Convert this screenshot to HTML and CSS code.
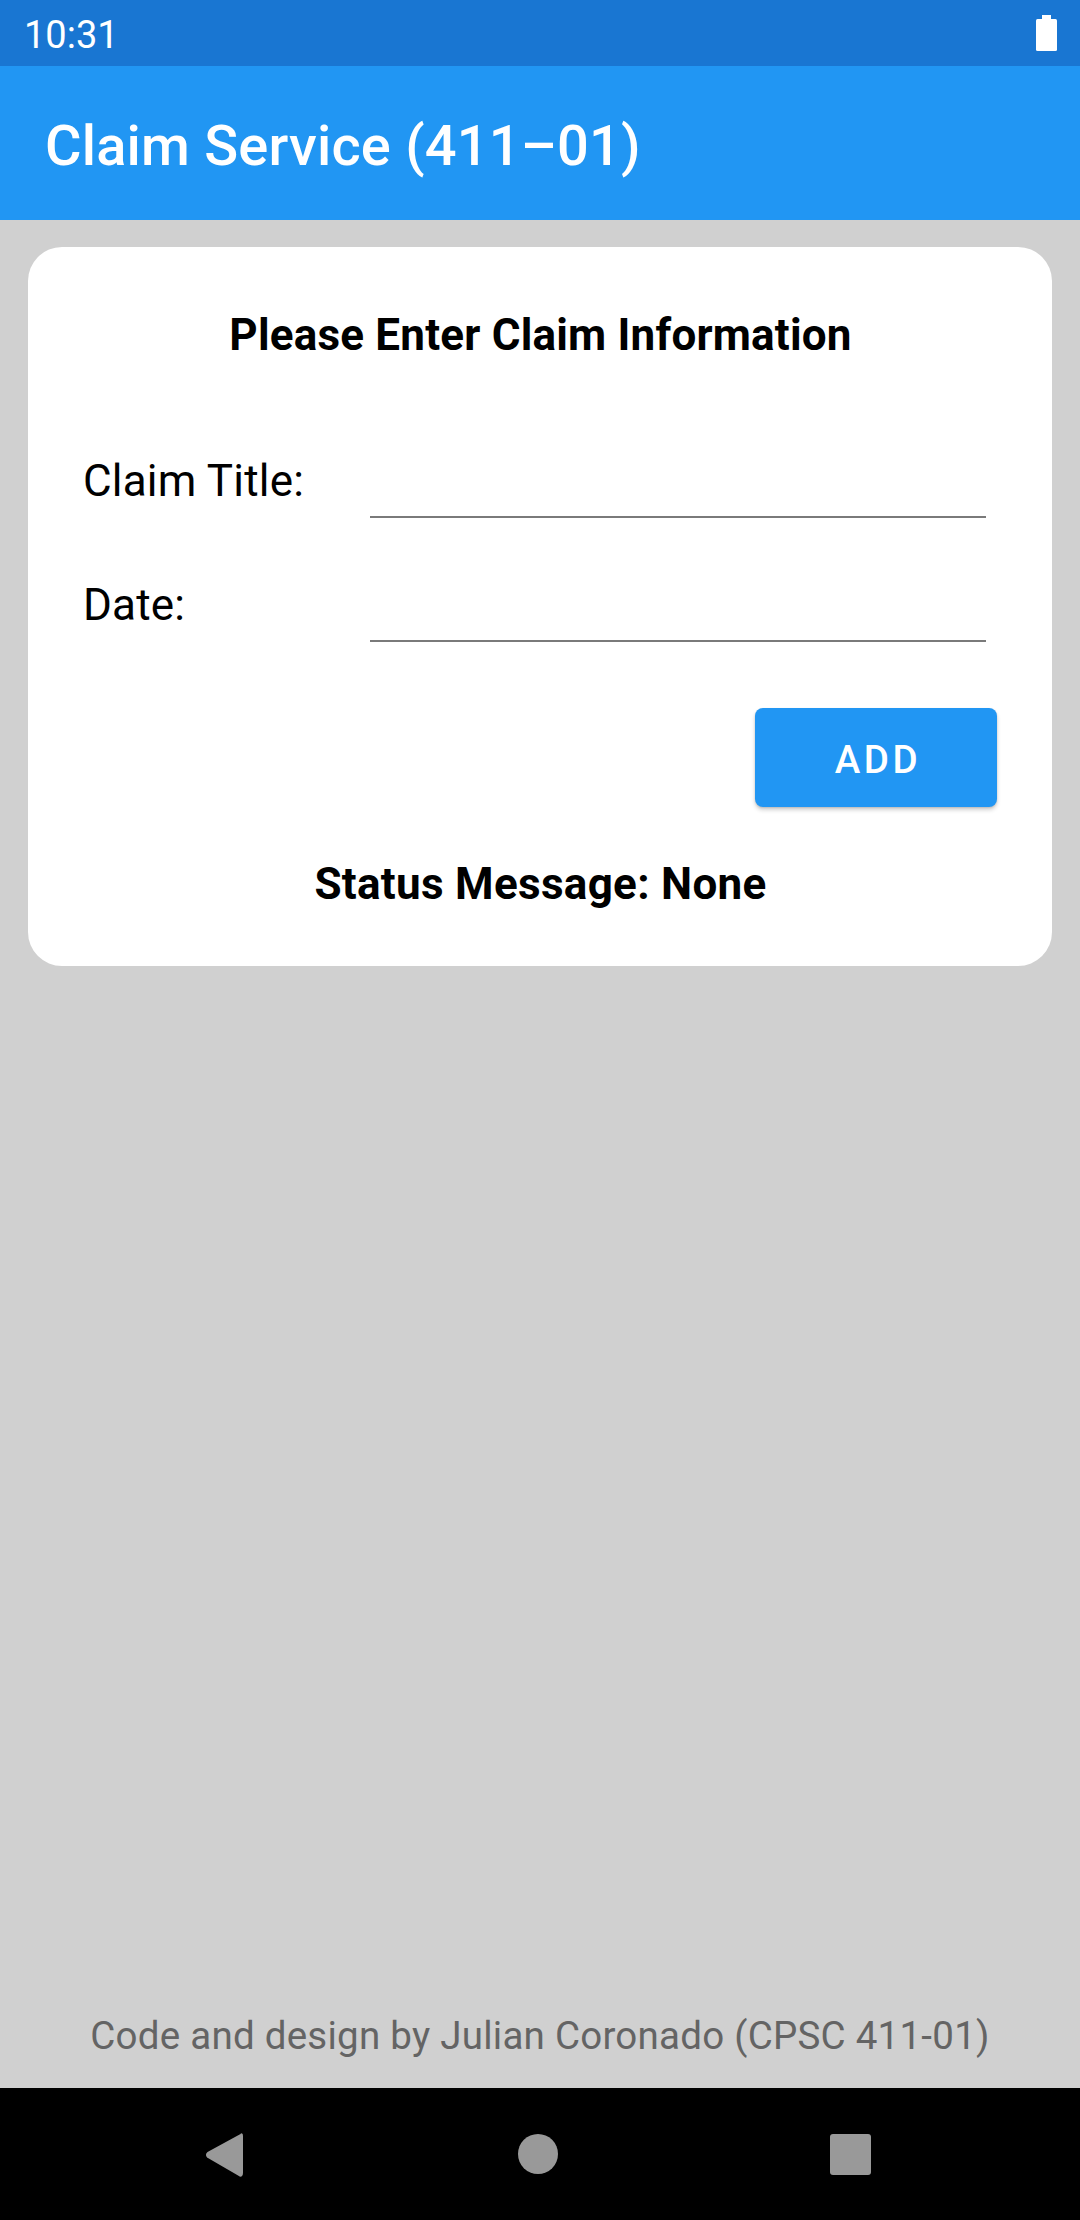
FILE: index.html
```html
<!DOCTYPE html>
<html>
<head>
<meta charset="utf-8">
<link rel="stylesheet" href="styles.css">
</head>
<body>
<div class="screen">
  <div class="statusbar">
    <span class="time">10:31</span>
    <svg class="battery" width="22" height="37" viewBox="0 0 22 37"><rect x="6" y="0" width="9" height="5" fill="#fff"/><rect x="0" y="4" width="21" height="32" rx="1.5" fill="#fff"/></svg>
  </div>
  <div class="appbar"><span class="title">Claim Service (411–01)</span></div>
  <main class="content">
    <section class="card">
      <h1 class="heading">Please Enter Claim Information</h1>
      <div class="form-row">
        <label class="label">Claim Title:</label>
        <div class="field"></div>
      </div>
      <div class="form-row">
        <label class="label">Date:</label>
        <div class="field"></div>
      </div>
      <div class="actions"><button class="btn">ADD</button></div>
      <p class="status">Status Message: None</p>
    </section>
    <div class="spacer"></div>
    <p class="footer">Code and design by Julian Coronado (CPSC 411-01)</p>
  </main>
  <nav class="navbar">
    <svg class="nav-back" width="40" height="46" viewBox="0 0 40 46"><path d="M36 3 Q37 1 37 5 L37 41 Q37 45 34 43 L3 25 Q1 23 3 21 Z" fill="#999" stroke="#999" stroke-width="2" stroke-linejoin="round"/></svg>
    <span class="nav-home"></span>
    <span class="nav-recent"></span>
  </nav>
</div>
</body>
</html>
```
FILE: styles.css
```css
* { box-sizing: border-box; }
html, body { margin: 0; padding: 0; }
body { width: 1080px; height: 2220px; font-family: Roboto, "Noto Sans", sans-serif; background: #d0d0d0; }
.screen { display: flex; flex-direction: column; height: 2220px; }
.statusbar { height: 66px; background: #1976d2; display: flex; align-items: flex-start; justify-content: space-between; padding: 0 22px 0 24px; }
.time { color: #fff; font-size: 38px; line-height: 66px; padding-top: 2px; letter-spacing: 0; }
.battery { margin-top: 15px; }
.appbar { height: 154px; background: #2196f3; padding: 48px 0 0 45px; }
.title { color: #fff; font-size: 56px; font-weight: 500; line-height: 64px; display: block; letter-spacing: 0.2px; }
.content { flex: 1; display: flex; flex-direction: column; padding: 27px 28px 0 28px; }
.card { background: #fff; border-radius: 34px; padding: 62px 55px 56px 56px; display: flex; flex-direction: column; }
.heading { margin: 0 0 94px 0; font-size: 44px; font-weight: 700; line-height: 52px; text-align: center; color: #000; letter-spacing: 0.2px; }
.form-row { display: grid; grid-template-columns: 286px 616px; height: 63px; margin-bottom: 61px; }
.form-row + .form-row { margin-bottom: 66px; }
.label { font-size: 44px; line-height: 52px; color: #000; align-self: start; letter-spacing: 0.2px; margin-left: -1px; }
.field { border-bottom: 2px solid #7a7a7a; height: 63px; }
.actions { display: flex; justify-content: flex-end; }
.btn { width: 242px; height: 99px; border: none; border-radius: 8px; background: #2196f3; color: #fff; font-family: Roboto, sans-serif; font-size: 38.5px; font-weight: 500; letter-spacing: 3.6px; padding: 4px 0 0 4px; box-shadow: 0 3px 4px rgba(0,0,0,0.18), 0 1px 2px rgba(0,0,0,0.12); }
.status { margin: 51px 0 0 0; font-size: 44px; font-weight: 700; line-height: 52px; text-align: center; color: #000; letter-spacing: 0.3px; }
.spacer { flex: 1; }
.footer { margin: 0 0 30px 0; font-size: 38.5px; line-height: 45px; text-align: center; color: #646464; letter-spacing: 0.25px; }
.navbar { height: 132px; background: #000; display: flex; align-items: center; justify-content: space-between; padding: 0 209px 0 205px; }
.nav-back { display: block; margin-top: 1px; }
.nav-home { width: 40px; height: 40px; border-radius: 50%; background: #999; }
.nav-recent { width: 41px; height: 41px; border-radius: 3px; background: #999; }
```
